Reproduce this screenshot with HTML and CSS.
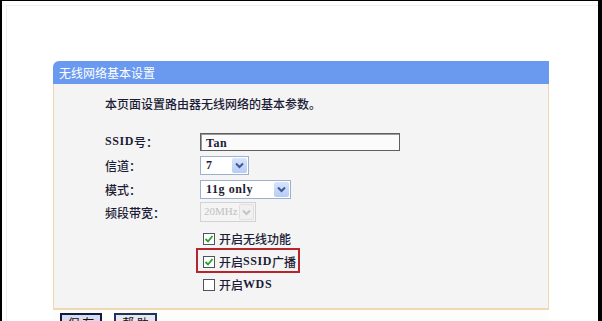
FILE: index.html
```html
<!DOCTYPE html>
<html lang="zh-CN">
<head>
<meta charset="utf-8">
<title>无线网络基本设置</title>
<link rel="stylesheet" href="styles.css">
</head>
<body>
<div class="frame">
  <div class="inner">
    <div class="panel">
      <div class="title">无线网络基本设置</div>
      <div class="body">
        <p class="intro">本页面设置路由器无线网络的基本参数。</p>
        <div class="form">
          <div class="label r1"><span class="m">SSID</span>号：</div>
          <div class="ctl"><div class="input"><span class="m">Tan</span></div></div>
          <div class="label">信道：</div>
          <div class="ctl">
            <div class="select w-ch"><span class="val m">7</span><span class="arrow"><svg width="9" height="7" viewBox="0 0 9 7"><path d="M1 1.5 L4.5 5 L8 1.5" fill="none" stroke="#3c5a96" stroke-width="2"/></svg></span></div>
          </div>
          <div class="label">模式：</div>
          <div class="ctl">
            <div class="select w-mode"><span class="val m">11g only</span><span class="arrow"><svg width="9" height="7" viewBox="0 0 9 7"><path d="M1 1.5 L4.5 5 L8 1.5" fill="none" stroke="#3c5a96" stroke-width="2"/></svg></span></div>
          </div>
          <div class="label">频段带宽：</div>
          <div class="ctl">
            <div class="select w-bw disabled"><span class="val m">20MHz</span><span class="arrow"><svg width="9" height="7" viewBox="0 0 9 7"><path d="M1 1.5 L4.5 5 L8 1.5" fill="none" stroke="#c4c4c4" stroke-width="2"/></svg></span></div>
          </div>
        </div>
        <div class="checks">
          <div class="check"><span class="box"><svg width="10" height="10" viewBox="0 0 10 10"><path d="M1.5 5 L4 7.5 L8.5 2" fill="none" stroke="#28a028" stroke-width="1.8"/></svg></span>开启无线功能</div>
          <div class="check"><span class="box"><svg width="10" height="10" viewBox="0 0 10 10"><path d="M1.5 5 L4 7.5 L8.5 2" fill="none" stroke="#28a028" stroke-width="1.8"/></svg></span>开启<span class="m">SSID</span>广播</div>
          <div class="check"><span class="box"></span>开启<span class="m">WDS</span></div>
          <div class="highlight"></div>
        </div>
      </div>
      <div class="actions">
        <button class="btn focus">保 存</button>
        <button class="btn">帮 助</button>
      </div>
    </div>
  </div>
</div>
</body>
</html>
```

FILE: styles.css
```css
html, body {
  margin: 0;
  padding: 0;
  background: #ffffff;
}
body {
  font-family: "Noto Sans CJK SC", "Noto Sans", sans-serif;
  font-size: 12px;
  color: #1c1c36;
}
.frame {
  width: 602px;
  height: 321px;
  box-sizing: border-box;
  border-top: 1px solid #000;
  border-left: 2px solid #000;
  border-right: 4px solid #000;
  overflow: hidden;
}
.inner {
  margin: 4px 0 0 4px;
  border-top: 1px solid #f0f0f0;
  border-left: 1px solid #f0f0f0;
  padding: 55px 0 0 46px;
  height: 400px;
}
.panel {
  width: 496px;
}
.title {
  height: 23px;
  line-height: 23px;
  background: #6a9af0;
  color: #ffffff;
  border-top-left-radius: 6px;
  padding-left: 6px;
}
.body {
  height: 226px;
  box-sizing: border-box;
  background: #f4f4f4;
  border-left: 1px solid #efd6ae;
  border-right: 1px solid #efd6ae;
  border-bottom: 2px solid #f0d8b2;
  padding-left: 51px;
}
.intro {
  margin: 0;
  padding-top: 12px;
  line-height: 16px;
  font-weight: 500;
}
.m {
  font-family: "Liberation Serif", serif;
  font-size: 12px;
  letter-spacing: 0.6px;
  font-weight: bold;
}
.form {
  margin-top: 18px;
  display: grid;
  grid-template-columns: 95px auto;
  grid-template-rows: 23px 25px 23px 22px;
}
.label {
  display: flex;
  align-items: center;
  font-weight: 500;
}
.ctl {
  display: flex;
  align-items: center;
}
.input {
  width: 200px;
  height: 18px;
  box-sizing: border-box;
  border: 1px solid #5f5f5f;
  box-shadow: inset 1px 1px 0 #9a9a9a;
  background: #fbfbfb;
  padding-left: 5px;
  line-height: 16px;
}
.select {
  height: 19px;
  box-sizing: border-box;
  border: 1px solid #9db0cc;
  background: #ffffff;
  display: flex;
  align-items: stretch;
}
.select .val {
  flex: 1;
  padding-left: 5px;
  line-height: 17px;
  white-space: nowrap;
  overflow: hidden;
}
.select .arrow {
  width: 15px;
  flex: none;
  margin: 1px;
  background: linear-gradient(#d8e4fc, #b7cbf6);
  border-radius: 2px;
  display: flex;
  align-items: center;
  justify-content: center;
}
.w-ch { width: 49px; }
.w-mode { width: 91px; }
.w-bw { width: 56px; height: 20px; }
.select.disabled {
  border-color: #d2d2d2;
  background: #f4f4f4;
  color: #c0c0c0;
}
.select.disabled .val {
  font-weight: normal;
  letter-spacing: 0;
  font-size: 11px;
  padding-left: 3px;
}
.select.disabled .arrow {
  width: 13px;
  background: #f0f0f0;
  border: 1px solid #e0e0e0;
  margin: 1px;
}
.checks {
  position: relative;
  margin: 4px 0 0 95px;
  width: 110px;
}
.check {
  height: 23px;
  display: flex;
  align-items: center;
  padding-left: 3px;
  font-weight: 500;
}
.box {
  width: 12px;
  height: 12px;
  box-sizing: border-box;
  border: 1px solid #4c5462;
  background: #ffffff;
  margin-right: 4px;
  display: flex;
  align-items: center;
  justify-content: center;
}
.highlight {
  position: absolute;
  left: -4px;
  top: 21px;
  width: 104px;
  height: 25px;
  box-sizing: border-box;
  border: 2px solid #b4262c;
}
.actions {
  padding: 3px 0 0 7px;
  display: flex;
  gap: 12px;
  background: #fdfdfb;
}
.btn {
  font-family: "Noto Sans CJK SC", sans-serif;
  font-size: 12px;
  color: #111;
  background: #e6e6f0;
  border: 2px solid #22305c;
  height: 20px;
  width: 43px;
  padding: 0;
  line-height: 14px;
}
.btn.focus {
  width: 42px;
  background: #d8dcee;
  border-color: #101a44;
}
```
